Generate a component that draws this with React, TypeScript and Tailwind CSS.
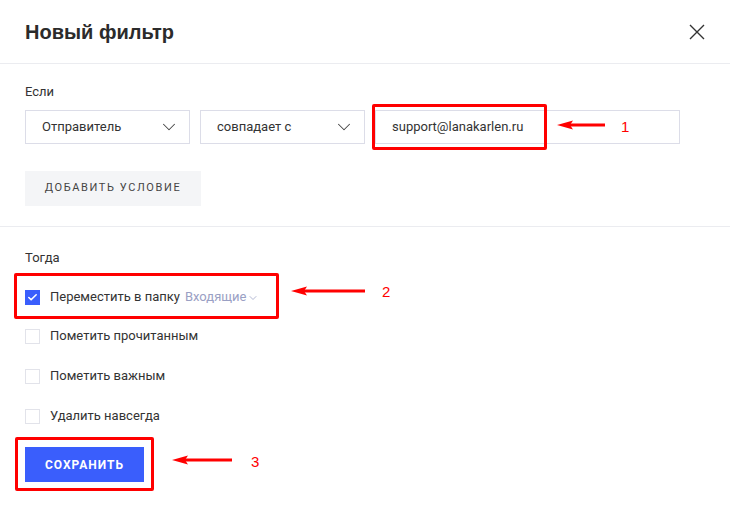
import { ChevronDown, Check } from 'lucide-react';

const ACTIONS = [
  { label: 'Пометить прочитанным' },
  { label: 'Пометить важным' },
  { label: 'Удалить навсегда' },
];

function Arrow({ className, width }: { className: string; width: number }) {
  return (
    <svg className={className} width={width} height={10} viewBox={`0 0 ${width} 10`}>
      <line x1={12} y1={5} x2={width} y2={5} stroke="#ff0000" strokeWidth={3} />
      <polygon points={`0,5 16,0.5 13,5 16,9.5`} fill="#ff0000" />
    </svg>
  );
}

function Select({ label, width }: { label: string; width: string }) {
  return (
    <div className={`${width} h-[34px] border border-[#dcdde8] flex items-center justify-between pl-4 pr-[9px] text-[13px] text-[#333]`}>
      <span>{label}</span>
      <ChevronDown className="w-[22px] h-[22px] text-[#444]" strokeWidth={1.1} />
    </div>
  );
}

export default function App() {
  return (
    <div className="relative w-[730px] h-[506px] bg-white overflow-hidden font-['Roboto','Liberation_Sans',sans-serif] text-[#333]">
      {/* header */}
      <div className="h-16 border-b border-[#ebecf0] flex items-center justify-between pl-[25px] pr-[25px]">
        <h1 className="text-[20px] font-bold text-[#2b2b2b] font-['Liberation_Sans','Arial',sans-serif]">Новый фильтр</h1>
        <svg width={16} height={16} viewBox="0 0 16 16" className="text-[#333]">
          <path d="M1 1L15 15M15 1L1 15" stroke="currentColor" strokeWidth={1.4} fill="none" />
        </svg>
      </div>

      {/* if */}
      <div className="pl-[25px] pt-[20px] pb-[20px] border-b border-[#ebecf0]">
        <div className="text-[13px] leading-4 text-[#333]">Если</div>
        <div className="flex gap-[10px] mt-[10px]">
          <Select label="Отправитель" width="w-[165px]" />
          <Select label="совпадает с" width="w-[165px]" />
          <div className="w-[305px] h-[34px] border border-[#dcdde8] flex items-center pl-4 text-[13px] text-[#333]">
            support@lanakarlen.ru
          </div>
        </div>
        <button className="mt-[27px] w-[176px] h-[35px] bg-[#f4f5f7] text-[11px] tracking-[1.6px] text-[#444] uppercase">
          Добавить условие
        </button>
      </div>

      {/* then */}
      <div className="pl-[25px] pt-[23px]">
        <div className="text-[13px] leading-4 text-[#333]">Тогда</div>
        <div className="mt-[23px] h-4 flex items-center text-[13px]">
          <span className="w-[15px] h-[15px] bg-[#3a5efc] flex items-center justify-center">
            <Check className="w-[11px] h-[11px] text-white" strokeWidth={3.5} />
          </span>
          <span className="ml-[10px] text-[#333]">Переместить в папку</span>
          <span className="ml-[5px] text-[#9aa0c4] flex items-center">
            Входящие
            <ChevronDown className="w-[12px] h-[12px] ml-[1px] mt-[2px]" strokeWidth={1.5} />
          </span>
        </div>
        {ACTIONS.map((a, i) => (
          <div key={a.label} className={`${i === 0 ? 'mt-[23px]' : 'mt-[24px]'} h-4 flex items-center text-[13px]`}>
            <span className="w-[15px] h-[15px] border border-[#e2e3ea] bg-white" />
            <span className="ml-[10px] text-[#333]">{a.label}</span>
          </div>
        ))}
        <button className="mt-[23px] w-[119px] h-[35px] bg-[#3a5efc] text-white text-[12px] font-bold tracking-[1px] uppercase">
          Сохранить
        </button>
      </div>

      {/* annotations */}
      <div className="absolute left-[372px] top-[104px] w-[175px] h-[46px] border-[3px] border-[#ff0000] rounded-[2px]" />
      <Arrow className="absolute left-[557px] top-[120px]" width={48} />
      <span className="absolute left-[621px] top-[117px] text-[15px] leading-5 text-[#ff0000] font-['Liberation_Sans',sans-serif]">1</span>

      <div className="absolute left-[14px] top-[273px] w-[265px] h-[46px] border-[3px] border-[#ff0000] rounded-[2px]" />
      <Arrow className="absolute left-[291px] top-[286px]" width={74} />
      <span className="absolute left-[382px] top-[282px] text-[15px] leading-5 text-[#ff0000] font-['Liberation_Sans',sans-serif]">2</span>

      <div className="absolute left-[15px] top-[437px] w-[139px] h-[54px] border-[3px] border-[#ff0000] rounded-[2px]" />
      <Arrow className="absolute left-[172px] top-[455px]" width={60} />
      <span className="absolute left-[251px] top-[452px] text-[15px] leading-5 text-[#ff0000] font-['Liberation_Sans',sans-serif]">3</span>
    </div>
  );
}
